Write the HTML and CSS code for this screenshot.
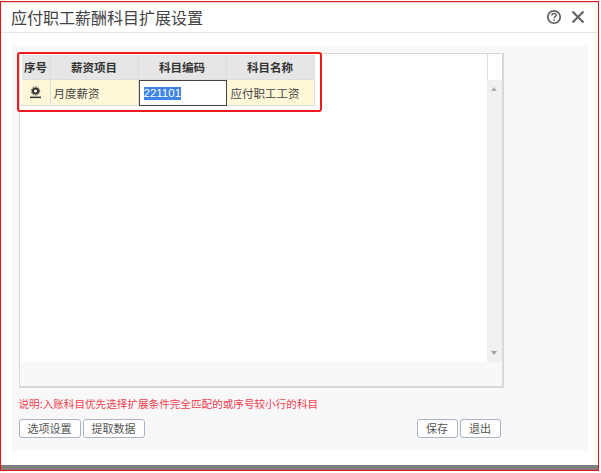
FILE: index.html
```html
<!DOCTYPE html>
<html lang="zh">
<head>
<meta charset="utf-8">
<title>应付职工薪酬科目扩展设置</title>
<link rel="stylesheet" href="styles.css">
</head>
<body>
<div class="frame">
  <div class="dialog">
    <header class="titlebar">
      <h1 class="title">应付职工薪酬科目扩展设置</h1>
      <div class="tools">
        <svg class="icon" viewBox="0 0 16 16" width="16" height="16"><circle cx="8" cy="8" r="6.2" fill="none" stroke="#666" stroke-width="1.8"/><path d="M5.9 6.4c0-1.3 1-2 2.2-2s2.1.7 2.1 1.8c0 1.5-2.1 1.5-2.1 3" fill="none" stroke="#666" stroke-width="1.5"/><rect x="7.3" y="10.3" width="1.6" height="1.6" fill="#666"/></svg>
        <svg class="icon" viewBox="0 0 14 14" width="14" height="14"><path d="M1.5 1.5l11 11M12.5 1.5l-11 11" fill="none" stroke="#666" stroke-width="2.2"/></svg>
      </div>
    </header>
    <main class="panel">
      <div class="grid">
        <div class="grid-top">
          <div class="grid-main">
            <div class="row head">
              <div class="cell c0">序号</div>
              <div class="cell c1">薪资项目</div>
              <div class="cell c2">科目编码</div>
              <div class="cell c3">科目名称</div>
            </div>
            <div class="row data">
              <div class="cell c0">
                <svg viewBox="0 0 13 13" width="13" height="13"><circle cx="6.5" cy="5" r="2.6" fill="none" stroke="#333" stroke-width="2"/><circle cx="6.5" cy="5" r="4.2" fill="none" stroke="#333" stroke-width=".9" stroke-dasharray="1.5 1.2"/><rect x="1" y="10.6" width="11" height="1.5" fill="#333"/></svg>
              </div>
              <div class="cell c1 left">月度薪资</div>
              <div class="cell c2 editor"><span class="selected">221101</span></div>
              <div class="cell c3 left">应付职工工资</div>
            </div>
          </div>
          <div class="scrollbar">
            <div class="scroll-head"></div>
            <div class="scroll-track">
              <span class="arrow up"></span>
              <span class="arrow down"></span>
            </div>
          </div>
        </div>
      </div>
      <p class="note">说明:入账科目优先选择扩展条件完全匹配的或序号较小行的科目</p>
      <div class="actions">
        <button class="btn">选项设置</button>
        <button class="btn">提取数据</button>
        <span class="spacer"></span>
        <button class="btn small">保存</button>
        <button class="btn small">退出</button>
      </div>
    </main>
  </div>
  <div class="highlight"></div>
</div>
</body>
</html>
```
FILE: styles.css
```css
* { box-sizing: border-box; }
html, body { margin: 0; padding: 0; background: #fff; }
body { width: 601px; height: 473px; padding-top: 1px; overflow: hidden; font-family: "Noto Sans CJK SC", "Liberation Sans", sans-serif; }
.frame { position: relative; width: 599px; height: 470px; border: 1.5px solid #f01010; background: #fff; }
.dialog { display: flex; flex-direction: column; height: 100%; border-top: 1px solid #ddd; border-bottom: 5px solid #808080; }
.titlebar { display: flex; align-items: center; justify-content: space-between; height: 27px; padding: 0 13px 2px 10px; border-bottom: 1px solid #e5e5e5; flex: none; box-sizing: content-box; }
.title { margin: 0; font-size: 16px; font-weight: 400; color: #444; line-height: 22px; }
.tools { display: flex; align-items: center; gap: 9px; }
.icon { display: block; }
.panel { width: 576px; height: 404px; margin: 13px 0 0 10.5px; padding: 7px 84px 0 7px; background: #f8f8f8; flex: none; }
.grid { width: 485px; height: 335px; border: 1px solid #d8d8d8; border-width: 1px 2px 2px 1px; }
.grid-top { display: flex; height: 308px; background: #fff; }
.grid-main { flex: 1; padding: 1px 0 0 2px; }
.row { display: flex; }
.cell { display: flex; align-items: center; justify-content: center; font-size: 11.5px; color: #333; border-right: 1px solid #ddd; }
.head .cell { height: 25px; background: #e6e6e6; font-weight: 700; color: #333; border-bottom: 1px solid #ddd; }
.data .cell { height: 26px; background: #fff8d8; border-bottom: 1px solid #ddd; }
.c0 { width: 29px; }
.c1, .c2, .c3 { width: 88px; }
.cell.left { justify-content: flex-start; padding-left: 3px; color: #444; }
.cell.c3.left { padding-left: 4px; }
.data .cell.editor { justify-content: flex-start; padding-left: 4px; background: #fff; border: 1px solid #444; }
.selected { background: #3d83e8; color: #fff; font-family: "Liberation Sans", sans-serif; font-size: 11.5px; line-height: 13px; }
.scrollbar { display: flex; flex-direction: column; width: 15px; flex: none; }
.scroll-head { height: 26px; border-left: 1px solid #ddd; flex: none; }
.scroll-track { display: flex; flex: 1; flex-direction: column; align-items: center; justify-content: space-between; padding: 7px 0; background: #f0f0f0; }
.arrow { width: 0; height: 0; border-left: 3.5px solid transparent; border-right: 3.5px solid transparent; }
.arrow.up { border-bottom: 4px solid #b0b0b0; }
.arrow.down { border-top: 4px solid #a0a0a0; }
.note { margin: 9px 0 0; font-size: 10.6px; line-height: 14px; color: #f04050; }
.actions { display: flex; align-items: center; gap: 2px; margin-top: 8px; width: 482px; }
.spacer { flex: 1; }
.btn { width: 62px; height: 19px; padding: 0; border: 1px solid #a8b4c4; border-radius: 3px; background: #fff; font-family: inherit; font-size: 11px; line-height: 17px; color: #555; }
.btn.small { width: 41px; }
.highlight { position: absolute; left: 16px; top: 49.5px; width: 305px; height: 60px; border: 2.5px solid #ee1c1c; border-radius: 3px; pointer-events: none; }
```
